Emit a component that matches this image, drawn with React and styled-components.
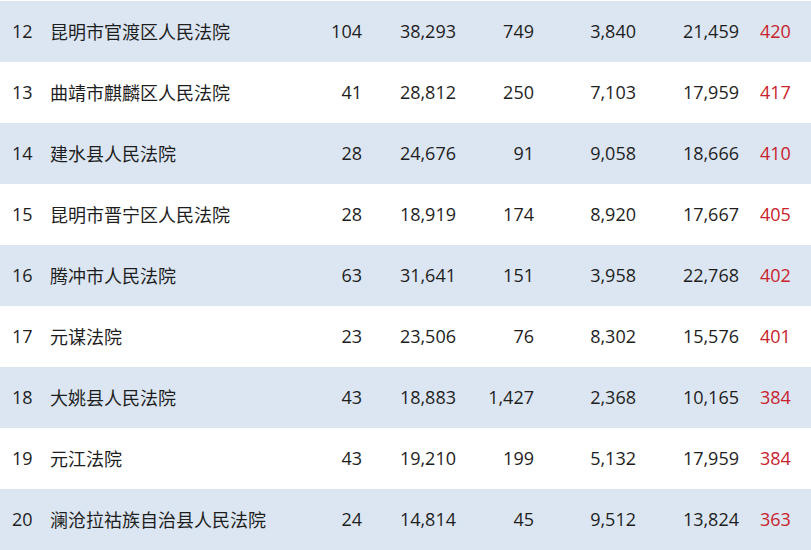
import React from "react";
import styled, { createGlobalStyle } from "styled-components";

const Global = createGlobalStyle`
  html, body { margin: 0; padding: 0; background: #ffffff; }
  body { font-family: "Open Sans", "Noto Sans CJK SC", sans-serif; }
`;

const Table = styled.div`
  width: 811px;
  padding-top: 1px;
  display: flex;
  flex-direction: column;
`;

const Row = styled.div`
  box-sizing: border-box;
  display: grid;
  grid-template-columns: 38px 250px 62px 94px 78px 102px 103px 72px;
  padding-left: 12px;
  padding-bottom: 2px;
  height: 61px;
  align-items: center;
  background: ${(p) => (p.$shaded ? "#dce6f2" : "#ffffff")};
  font-size: 18px;
  color: #1e1e1e;
`;

const Rank = styled.div`
  text-align: left;
`;

const Name = styled.div`
  text-align: left;
  font-family: "Noto Sans CJK SC", sans-serif;
  font-size: 18px;
  white-space: nowrap;
`;

const Num = styled.div`
  text-align: right;
`;

const Score = styled.div`
  text-align: left;
  padding-left: 21px;
  color: #c8232c;
`;

const rows = [
  ["12", "昆明市官渡区人民法院", "104", "38,293", "749", "3,840", "21,459", "420"],
  ["13", "曲靖市麒麟区人民法院", "41", "28,812", "250", "7,103", "17,959", "417"],
  ["14", "建水县人民法院", "28", "24,676", "91", "9,058", "18,666", "410"],
  ["15", "昆明市晋宁区人民法院", "28", "18,919", "174", "8,920", "17,667", "405"],
  ["16", "腾冲市人民法院", "63", "31,641", "151", "3,958", "22,768", "402"],
  ["17", "元谋法院", "23", "23,506", "76", "8,302", "15,576", "401"],
  ["18", "大姚县人民法院", "43", "18,883", "1,427", "2,368", "10,165", "384"],
  ["19", "元江法院", "43", "19,210", "199", "5,132", "17,959", "384"],
  ["20", "澜沧拉祜族自治县人民法院", "24", "14,814", "45", "9,512", "13,824", "363"],
];

export default function App() {
  return (
    <>
      <Global />
      <Table>
        {rows.map((r, i) => (
          <Row key={r[0]} $shaded={i % 2 === 0}>
            <Rank>{r[0]}</Rank>
            <Name>{r[1]}</Name>
            <Num>{r[2]}</Num>
            <Num>{r[3]}</Num>
            <Num>{r[4]}</Num>
            <Num>{r[5]}</Num>
            <Num>{r[6]}</Num>
            <Score>{r[7]}</Score>
          </Row>
        ))}
      </Table>
    </>
  );
}
